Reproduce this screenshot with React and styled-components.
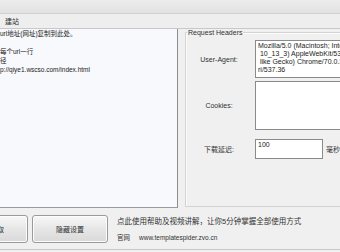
import React from "react";
import styled, { createGlobalStyle } from "styled-components";

const Global = createGlobalStyle`
  html, body { margin: 0; padding: 0; background: #f0f0f0; }
  body { width: 340px; height: 252px; overflow: hidden; }
  * { box-sizing: border-box; }
`;

const FONT = `"Liberation Sans", "Noto Sans CJK SC", sans-serif`;

const Window = styled.div`
  width: 340px;
  height: 252px;
  display: flex;
  flex-direction: column;
  overflow: hidden;
  background: #f0f0f0;
  font-family: ${FONT};
  color: #303030;
`;

const TitleBand = styled.div`
  height: 14px;
  flex: none;
  background: linear-gradient(#ececec, #e2e2e2);
  border-bottom: 1px solid #d0d0d0;
`;

const Toolbar = styled.div`
  height: 15px;
  flex: none;
  display: flex;
  align-items: center;
  padding-left: 5px;
  background: #eeeeee;
  border-bottom: 1px solid #c8c8c8;
  font-size: 7px;
`;

const Main = styled.div`
  height: 179px;
  flex: none;
  display: flex;
`;

const UrlArea = styled.div`
  width: 178px;
  flex: none;
  background: #f8f9fc;
  border-right: 1px solid #8c8c8c;
  border-bottom: 1px solid #9a9a9a;
  font-size: 6.5px;
  line-height: 9px;
  white-space: pre;
  overflow: hidden;
  color: #222;
`;

const GroupBox = styled.div`
  position: relative;
  flex: none;
  width: 200px;
  height: 175px;
  margin: 3px 0 0 7px;
  border: 1px solid #d3d3d3;
  box-shadow: inset 1px 1px 0 #fbfbfb;
  padding-top: 7px;
  display: flex;
  flex-direction: column;
`;

const Legend = styled.span`
  position: absolute;
  top: -4px;
  left: 1px;
  padding: 0 1px;
  background: #f0f0f0;
  font-size: 7px;
  line-height: 8px;
`;

const FieldRow = styled.div`
  display: flex;
  align-items: center;
  height: ${(p) => p.$h}px;
  margin-bottom: ${(p) => p.$mb || 0}px;
`;

const FieldLabel = styled.div`
  width: 66px;
  flex: none;
  text-align: center;
  font-size: 7px;
  margin-right: 3px;
`;

const TextBox = styled.div`
  width: ${(p) => p.$w}px;
  height: 100%;
  flex: none;
  background: #ffffff;
  border: 1px solid #8a8a8a;
  padding: 1px 0 0 2px;
  font-size: 7px;
  line-height: 8px;
  white-space: pre;
  overflow: hidden;
  color: #222;
`;

const Unit = styled.span`
  margin-left: 3px;
  font-size: 7px;
`;

const BottomBar = styled.div`
  height: 42px;
  flex: none;
  display: flex;
  align-items: flex-start;
  border-bottom: 1px solid #c6c6c6;
`;

const Button = styled.div`
  width: 76px;
  height: 28px;
  flex: none;
  margin-top: 7px;
  margin-left: ${(p) => p.$ml}px;
  display: flex;
  align-items: center;
  justify-content: center;
  border: 1px solid #9a9a9a;
  border-radius: 3px;
  background: linear-gradient(#f8f8f8, #e6e6e6 50%, #d9d9d9);
  box-shadow: inset 0 0 0 1px #fcfcfc;
  font-size: 7px;
`;

const Help = styled.div`
  margin: 9px 0 0 9px;
  display: flex;
  flex-direction: column;
  gap: 6px;
`;

const HelpLine = styled.div`
  font-size: 7.5px;
  line-height: 10px;
  white-space: nowrap;
`;

const SiteLine = styled.div`
  display: flex;
  font-size: 6.5px;
  line-height: 9px;
  white-space: nowrap;
`;

const SiteLabel = styled.span`
  margin-right: 9px;
`;

export default function App() {
  return (
    <>
      <Global />
      <Window>
        <TitleBand />
        <Toolbar>建站</Toolbar>
        <Main>
          <UrlArea>
            {"url地址(网址)复制到此处。\n\n每个url一行\n径\np://qiye1.wscso.com/index.html"}
          </UrlArea>
          <GroupBox>
            <Legend>Request Headers</Legend>
            <FieldRow $h={38} $mb={3}>
              <FieldLabel>User-Agent:</FieldLabel>
              <TextBox $w={130}>
                {"Mozilla/5.0 (Macintosh; Intel Mac OS X\n 10_13_3) AppleWebKit/537.36 (KHTML,\n like Gecko) Chrome/70.0.3538.77 Safa\nri/537.36"}
              </TextBox>
            </FieldRow>
            <FieldRow $h={49} $mb={9}>
              <FieldLabel>Cookies:</FieldLabel>
              <TextBox $w={130} />
            </FieldRow>
            <FieldRow $h={20}>
              <FieldLabel>下载延迟:</FieldLabel>
              <TextBox $w={68}>100</TextBox>
              <Unit>毫秒</Unit>
            </FieldRow>
          </GroupBox>
        </Main>
        <BottomBar>
          <Button $ml={-48}>开始扒取</Button>
          <Button $ml={4}>隐藏设置</Button>
          <Help>
            <HelpLine>点此使用帮助及视频讲解，让你5分钟掌握全部使用方式</HelpLine>
            <SiteLine>
              <SiteLabel>官网</SiteLabel>
              <span>www.templatespider.zvo.cn</span>
            </SiteLine>
          </Help>
        </BottomBar>
      </Window>
    </>
  );
}
